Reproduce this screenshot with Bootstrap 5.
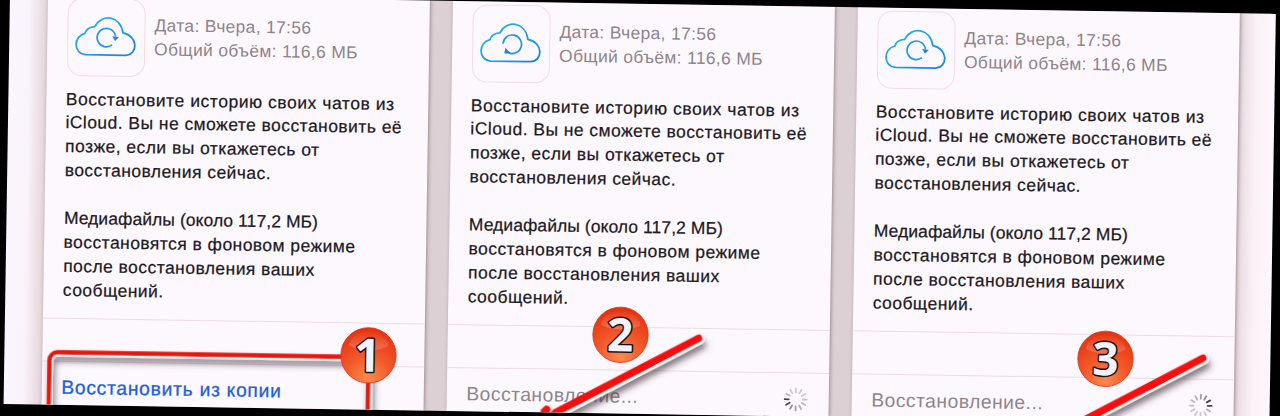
<!DOCTYPE html>
<html lang="ru">
<head>
<meta charset="utf-8">
<meta name="viewport" content="width=device-width, initial-scale=1">
<title>Восстановление из копии</title>
<link href="https://cdn.jsdelivr.net/npm/bootstrap@5.3.0/dist/css/bootstrap.min.css" rel="stylesheet">
<style>
body { background: #000; height: 416px; font-family: "Liberation Sans", Arial, sans-serif; }
.sheet { width: 1266px; height: 409.5px; margin: -6.3px 0 0 10.1px; padding: 0 36.5px 0 37.5px; transform: rotate(.9deg); transform-origin: 0 0;
  background: linear-gradient(90deg, #fbf6fd 0, #f9f3fa 20px, #e4d5da 37px, #ddd0d4 60px, #ddd0d4 1227px, #efe4ea 1238px, #fbf2f7 1248px, #fdf6fc 100%); }
.screen { width: 382px; height: 100%; background: #fdf8fe; box-shadow: 1px 0 4px rgba(90,65,75,.5); padding: 3px 0 0 20px; }
.cloudbox { width: 78.5px; height: 78px; border: 1px solid #f3dce2; border-radius: 15px; flex: none; }
.info { color: #8d838c; font-size: 17.4px; line-height: 23.7px; margin: 15px 0 0 9px; letter-spacing: .36px; }
.story { color: #1c1824; font-size: 17.4px; line-height: 23.9px; margin-top: 11.5px; height: 230.5px; letter-spacing: .5px; -webkit-text-stroke: .25px #1c1824; }
.ln { display: block; white-space: nowrap; }
.first { letter-spacing: .6px; }
.tight { letter-spacing: .12px; }
.strip { margin-left: -20px; height: 44px; border: solid #eadde2; border-width: 1px 0; flex: none; }
.act { font-size: 19.3px; line-height: 24px; padding-top: 13.5px; white-space: nowrap; letter-spacing: .5px; }
.act svg { margin-top: -1px; }
.go { color: #1f5fdc; letter-spacing: .72px; -webkit-text-stroke: .3px #1f5fdc; }
.wait { color: #8d858d; padding-right: 20px; }
.num { font: bold 46px "Open Sans", "Liberation Sans", sans-serif; paint-order: stroke; }
</style>
</head>
<body class="overflow-hidden">
<svg width="0" height="0" class="position-absolute" aria-hidden="true">
  <defs>
    <linearGradient id="blue" x1="0" y1="0" x2="1" y2="1"><stop offset="0" stop-color="#25b8f0"/><stop offset="1" stop-color="#1583e8"/></linearGradient>
    <symbol id="cloud" viewBox="0 0 78 78"><path d="M18 57C5 56 5 38 17 35C18 31 22 28.500 27 28C34 14 53 16 56 34C72 37 72 56 59 57Z" fill="none" stroke="url(#blue)" stroke-width="1.8" stroke-linejoin="round"/></symbol>
    <symbol id="spin" viewBox="-13 -13 26 26"><g stroke-width="1.8" stroke-linecap="round" stroke="#888088">
      <path d="M0-7V-11" opacity=".4"/><path d="M0-7V-11" transform="rotate(30)" opacity=".4"/><path d="M0-7V-11" transform="rotate(60)" opacity=".4"/><path d="M0-7V-11" transform="rotate(90)" opacity=".45"/><path d="M0-7V-11" transform="rotate(120)" opacity=".5"/><path d="M0-7V-11" transform="rotate(150)" opacity=".6"/><path d="M0-7V-11" transform="rotate(180)" opacity=".75"/><path d="M0-7V-11" transform="rotate(210)" opacity=".9"/><path d="M0-7V-11" transform="rotate(240)" stroke="#4a424c"/><path d="M0-7V-11" transform="rotate(270)" stroke="#4a424c"/><path d="M0-7V-11" transform="rotate(300)" opacity=".6"/><path d="M0-7V-11" transform="rotate(330)" opacity=".4"/></g></symbol>
    <radialGradient id="ball" cx=".5" cy=".9" r=".9"><stop offset="0" stop-color="#ff8a4c"/><stop offset=".45" stop-color="#f2592a"/><stop offset="1" stop-color="#e4300f"/></radialGradient>
    <linearGradient id="gloss" x1="0" y1="0" x2="0" y2="1"><stop offset="0" stop-color="#fff" stop-opacity=".02"/><stop offset="1" stop-color="#fff" stop-opacity=".2"/></linearGradient>
    <symbol id="badge" viewBox="-30 -30 60 60"><circle r="27.7" fill="url(#ball)" stroke="#df3018" stroke-width=".8"/><path d="M-20-10C-15-28 15-28 20-10C12-4-12-4-20-10Z" fill="url(#gloss)"/></symbol>
    <filter id="drop" x="-20%" y="-20%" width="140%" height="150%"><feDropShadow dx="2" dy="5" stdDeviation="3" flood-color="#403038" flood-opacity=".65"/></filter>
  </defs>
</svg>
<main class="sheet d-flex justify-content-between position-relative overflow-hidden">
  <section class="screen d-flex flex-column">
    <div class="d-flex">
      <div class="cloudbox"><svg width="76" height="76" viewBox="0 0 78 78"><use href="#cloud"/><path d="M45 46.500A9.500 9.500 0 1 1 48.500 38" fill="none" stroke="#2496ea" stroke-width="1.7"/><path d="M45 37.500l7 1-4 4z" fill="#2484e4"/></svg></div>
      <div class="info"><span class="ln">Дата: Вчера, 17:56</span><span class="ln">Общий объём: 116,6 МБ</span></div>
    </div>
    <div class="story"><span class="ln first">Восстановите историю своих чатов из</span><span class="ln">iCloud. Вы не сможете восстановить её</span><span class="ln">позже, если вы откажетесь от</span><span class="ln">восстановления сейчас.</span><span class="ln">&nbsp;</span><span class="ln tight">Медиафайлы (около 117,2 МБ)</span><span class="ln">восстановятся в фоновом режиме</span><span class="ln">после восстановления ваших</span><span class="ln">сообщений.</span></div>
    <div class="strip"></div>
    <div class="act go">Восстановить из копии</div>
  </section>
  <section class="screen d-flex flex-column">
    <div class="d-flex">
      <div class="cloudbox"><svg width="76" height="76" viewBox="0 0 78 78"><use href="#cloud"/><path d="M30.500 39A9.500 9.500 0 1 1 36 48" fill="none" stroke="#2496ea" stroke-width="1.7"/><path d="M33 43l-1 6 7 0z" fill="#2484e4"/></svg></div>
      <div class="info"><span class="ln">Дата: Вчера, 17:56</span><span class="ln">Общий объём: 116,6 МБ</span></div>
    </div>
    <div class="story"><span class="ln first">Восстановите историю своих чатов из</span><span class="ln">iCloud. Вы не сможете восстановить её</span><span class="ln">позже, если вы откажетесь от</span><span class="ln">восстановления сейчас.</span><span class="ln">&nbsp;</span><span class="ln tight">Медиафайлы (около 117,2 МБ)</span><span class="ln">восстановятся в фоновом режиме</span><span class="ln">после восстановления ваших</span><span class="ln">сообщений.</span></div>
    <div class="strip"></div>
    <div class="act wait d-flex justify-content-between"><span>Восстановление...</span><svg width="26" height="26"><use href="#spin"/></svg></div>
  </section>
  <section class="screen d-flex flex-column">
    <div class="d-flex">
      <div class="cloudbox"><svg width="76" height="76" viewBox="0 0 78 78"><use href="#cloud"/><path d="M45 46.500A9.500 9.500 0 1 1 48.500 38" fill="none" stroke="#2496ea" stroke-width="1.7"/><path d="M45 37.500l7 1-4 4z" fill="#2484e4"/></svg></div>
      <div class="info"><span class="ln">Дата: Вчера, 17:56</span><span class="ln">Общий объём: 116,6 МБ</span></div>
    </div>
    <div class="story"><span class="ln first">Восстановите историю своих чатов из</span><span class="ln">iCloud. Вы не сможете восстановить её</span><span class="ln">позже, если вы откажетесь от</span><span class="ln">восстановления сейчас.</span><span class="ln">&nbsp;</span><span class="ln tight">Медиафайлы (около 117,2 МБ)</span><span class="ln">восстановятся в фоновом режиме</span><span class="ln">после восстановления ваших</span><span class="ln">сообщений.</span></div>
    <div class="strip"></div>
    <div class="act wait d-flex justify-content-between"><span>Восстановление...</span><svg width="26" height="26"><g transform="rotate(180 13 13)"><use href="#spin"/></g></svg></div>
  </section>
  <svg class="position-absolute top-0 start-0" width="1266" height="410" viewBox="0 0 1266 410">
    <g filter="url(#drop)" fill="none">
      <rect x="46.300" y="359" width="319.500" height="90" rx="7" stroke="#fff" stroke-width="5"/>
      <rect x="45.300" y="357.500" width="319" height="90" rx="8" stroke="#e8180c" stroke-width="4.300"/>
    </g>
    <g filter="url(#drop)" stroke-linecap="round" fill="none">
      <path d="M695 335L553 412M1199.500 347L1060 422" stroke="#fff" stroke-width="9"/>
      <path d="M694 333.500L552 410M541 409l2-2M1198.500 345.500L1059 421" stroke="#fb1108" stroke-width="7.500"/>
    </g>
    <use href="#badge" x="334.100" y="325.700" width="60" height="60"/>
    <use href="#badge" x="585.800" y="301.200" width="60" height="60"/>
    <use href="#badge" x="1071.100" y="317.600" width="60" height="60"/>
    <g class="num" text-anchor="middle" fill="#f2f2fb" stroke="#1c1018" stroke-width="3" stroke-linejoin="round">
      <text x="363" y="372">1</text><text x="615.500" y="347.500">2</text><text x="1101" y="364">3</text>
    </g>
  </svg>
</main>
<script src="https://cdn.jsdelivr.net/npm/bootstrap@5.3.0/dist/js/bootstrap.bundle.min.js"></script>
</body>
</html>
